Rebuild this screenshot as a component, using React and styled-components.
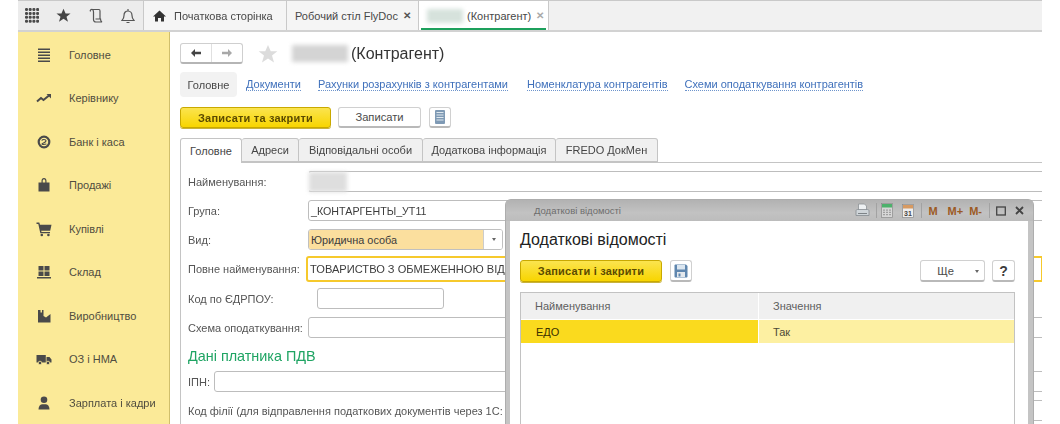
import React from "react";
import styled, { createGlobalStyle } from "styled-components";

const Global = createGlobalStyle`
  html, body { margin: 0; padding: 0; background: #fff; overflow: hidden; }
  body { font-family: "Liberation Sans", Arial, sans-serif; }
`;

const Shell = styled.div`
  position: relative;
  width: 1024px;
  height: 424px;
  margin-left: 18px;
  overflow: hidden;
  display: flex;
  flex-direction: column;
  filter: blur(0.4px);
  color: #4b4b4b;
`;

const TopBar = styled.header`
  flex: none;
  height: 32px;
  box-sizing: border-box;
  display: flex;
  background: #f1f1f1;
  border-top: 1px solid #c9c9c9;
  border-bottom: 2px solid #d2d2d2;
`;
const QuickIcons = styled.div`
  width: 125px;
  flex: none;
  display: flex;
  align-items: center;
  gap: 17px;
  padding-left: 7px;
  box-sizing: border-box;
  background: #ececec;
`;
const TabCell = styled.div`
  display: flex;
  align-items: center;
  flex: none;
  width: ${(p) => p.$w}px;
  box-sizing: border-box;
  padding-left: ${(p) => p.$pad}px;
  height: 100%;
  font-size: 11px;
  color: #484848;
  background: ${(p) => (p.$active ? "#fff" : "#f5f5f5")};
  border-left: 1px solid #c9c9c9;
  position: relative;
  ${(p) => p.$active && "border-right: 1px solid #c9c9c9;"}
  &::after {
    content: "";
    display: ${(p) => (p.$active ? "block" : "none")};
    position: absolute;
    left: 2px;
    right: 2px;
    bottom: 0;
    height: 2px;
    background: #1da05c;
  }
`;
const HomeGap = styled.span`width: 8px; flex: none;`;
const TabFill = styled.div`flex: 1;`;
const TabClose = styled.span`
  margin-left: 5px;
  font-size: 9.5px;
  font-weight: bold;
  color: ${(p) => (p.$dim ? "#aaa" : "#555")};
`;
const Blur = styled.span`
  display: inline-block;
  width: ${(p) => p.$w}px;
  height: ${(p) => p.$h}px;
  margin-left: ${(p) => p.$ml || 0}px;
  margin-right: ${(p) => p.$mr || 0}px;
  background: ${(p) => p.$c || "#d2d4d2"};
  filter: blur(2px);
  flex: none;
`;
const Body = styled.div`
  flex: 1;
  display: flex;
  min-height: 0;
`;
const Sidebar = styled.nav`
  width: 152px;
  flex: none;
  box-sizing: border-box;
  padding-top: 1px;
  background: #fbea98;
  border-right: 1px solid #d0bf6c;
`;
const SideItem = styled.div`
  height: 43.5px;
  display: flex;
  align-items: center;
  padding-left: 18px;
  gap: 17px;
  font-size: 11px;
  color: #504d40;
  white-space: nowrap;
`;
const Main = styled.main`
  flex: 1;
  min-width: 0;
  padding-left: 10px;
  display: flex;
  flex-direction: column;
`;
const TitleRow = styled.div`
  margin-top: 11px;
  height: 21px;
  display: flex;
  align-items: center;
`;
const NavButtons = styled.div`
  display: flex;
  width: 63px;
  height: 21px;
  box-sizing: border-box;
  border: 1px solid #cfcfcf;
  border-bottom: 2px solid #b5b5b5;
  border-radius: 3px;
  background: #fff;
  margin-right: 15px;
`;
const NavButton = styled.div`
  flex: 1;
  display: flex;
  align-items: center;
  justify-content: center;
  & + & { border-left: 1px solid #e0e0e0; }
`;
const Title = styled.h1`
  margin: 0;
  font-size: 16px;
  font-weight: normal;
  color: #333;
  display: flex;
  align-items: center;
`;
const Links = styled.div`
  margin-top: 8px;
  height: 25px;
  display: flex;
  align-items: center;
  font-size: 11px;
`;
const Chip = styled.div`
  width: 57px;
  height: 25px;
  margin-right: 9px;
  border-radius: 4px;
  background: #f2f2f2;
  display: flex;
  align-items: center;
  justify-content: center;
  color: #484848;
`;
const Link = styled.a`
  color: #3f70bb;
  border-bottom: 1px dotted #6d94cc;
  line-height: 12px;
  margin-right: ${(p) => p.$mr || 17}px;
  white-space: nowrap;
`;
const Toolbar = styled.div`
  margin-top: 10px;
  height: 21px;
  display: flex;
  gap: 7px;
`;
const YellowButton = styled.button`
  width: ${(p) => p.$w}px;
  height: ${(p) => p.$h || 21}px;
  box-sizing: border-box;
  padding: 0;
  border: 1px solid #c9a900;
  border-radius: 3px;
  background: linear-gradient(#fbe44f, #f8d500);
  color: #5b4a00;
  font: bold 11px "Liberation Sans", Arial, sans-serif;
  letter-spacing: 0.2px;
  box-shadow: 0 1px 0 #c8b23c;
`;
const PlainButton = styled.button`
  width: ${(p) => p.$w}px;
  height: ${(p) => p.$h || 21}px;
  margin-left: ${(p) => p.$ml || 0}px;
  box-sizing: border-box;
  padding: 0 ${(p) => p.$pr || 0}px 0 0;
  border: 1px solid #d0d0d0;
  border-bottom: 2px solid #b9b9b9;
  border-radius: 3px;
  background: #fff;
  color: #4a4a4a;
  font: 11.2px "Liberation Sans", Arial, sans-serif;
  display: flex;
  align-items: center;
  justify-content: center;
  position: relative;
  flex: none;
`;
const HelpButton = styled(PlainButton)`
  font-size: 14px;
  font-weight: bold;
  color: #3c3c3c;
`;
const Caret = styled.span`
  position: absolute;
  right: 5px;
  top: 9px;
  width: 0;
  height: 0;
  border: 2.5px solid transparent;
  border-top: 3px solid #666;
`;
const Tabs = styled.div`
  margin-top: 10px;
  height: 24px;
  display: flex;
  flex: none;
`;
const FormTab = styled.div`
  width: ${(p) => p.$w}px;
  box-sizing: border-box;
  height: ${(p) => (p.$active ? 25 : 24)}px;
  display: flex;
  align-items: center;
  justify-content: center;
  font-size: 11px;
  color: #454545;
  background: ${(p) => (p.$active ? "#fff" : "#f0f0f0")};
  border: 1px solid #c4c4c4;
  border-left-width: ${(p) => (p.$active ? 1 : 0)}px;
  border-bottom-width: ${(p) => (p.$active ? 0 : 1)}px;
  border-radius: 3px 3px 0 0;
  position: relative;
`;
const Panel = styled.section`
  flex: 1;
  border-left: 1px solid #c4c4c4;
  border-top: 1px solid #c4c4c4;
  padding: 8px 0 0 7px;
  margin-right: -1px;
`;
const Row = styled.div`
  display: flex;
  align-items: center;
  height: ${(p) => p.$h || 21}px;
  margin-top: ${(p) => p.$mt || 0}px;
`;
const Label = styled.label`
  width: ${(p) => p.$w}px;
  flex: none;
  font-size: 11px;
  color: #555;
  white-space: nowrap;
`;
const Field = styled.div`
  height: 100%;
  box-sizing: border-box;
  border: 1px solid #bdbdbd;
  border-radius: 3px 0 0 3px;
  background: #fff;
  font-size: 10.7px;
  color: #3c3c3c;
  padding-left: 2px;
  display: flex;
  align-items: center;
  overflow: hidden;
  white-space: nowrap;
  ${(p) => (p.$w ? `width: ${p.$w}px; flex: none; border-radius: 3px;` : "flex: 1;")}
  ${(p) => p.$focus && "border: 2px solid #f6c92c; padding-left: 2px; font-size: 11.1px;"}
`;
const BlurField = styled(Field)`
  border-left-color: transparent;
  padding-left: 0;
  overflow: visible;
`;
const PeachField = styled.div`
  width: 195px;
  height: 100%;
  flex: none;
  box-sizing: border-box;
  border: 1px solid #c0c0c0;
  border-radius: 3px;
  display: flex;
  overflow: hidden;
  font-size: 10.9px;
  color: #3c3c3c;
`;
const PeachValue = styled.div`
  flex: 1;
  background: #fbdf9e;
  padding-left: 2px;
  display: flex;
  align-items: center;
`;
const Drop = styled.div`
  width: 18px;
  position: relative;
  background: #fff;
  border-left: 1px solid #ccc;
`;
const DropCaret = styled(Caret)`
  right: 6px;
  top: 8px;
`;
const SectionTitle = styled.h2`
  margin: 8px 0 5px;
  height: 20px;
  line-height: 20px;
  font-size: 14.4px;
  font-weight: normal;
  color: #1fa463;
`;

const Modal = styled.div`
  position: absolute;
  left: 487px;
  top: 199px;
  width: 529px;
  height: 240px;
  box-sizing: border-box;
  display: flex;
  flex-direction: column;
  background: #c4c4c4;
  border-radius: 6px 6px 0 0;
  border: 1px solid #adadad;
  border-bottom: 0;
`;
const ModalHeader = styled.div`
  height: 21px;
  flex: none;
  display: flex;
  align-items: center;
  padding-left: 28px;
  font-size: 9.5px;
  color: #6c6c6c;
  background: linear-gradient(#b2b2b2, #c2c2c2 60%, #bcbcbc);
  border-radius: 5px 5px 0 0;
`;
const ModalTools = styled.div`
  margin-left: auto;
  display: flex;
  align-items: center;
  height: 100%;
  color: #9b5a24;
  font-size: 11px;
  font-weight: bold;
  padding-right: 9px;
`;
const ToolSep = styled.span`
  width: 1px;
  height: 15px;
  background: #a2a2a2;
  margin: 0 ${(p) => p.$r || 5}px 0 ${(p) => p.$l || 5}px;
`;
const ToolGap = styled.span`width: 9px; flex: none;`;
const Mem = styled.span`
  margin-right: ${(p) => p.$mr}px;
`;
const ModalBody = styled.div`
  flex: 1;
  margin: 0 5px 0 4px;
  background: #fff;
  padding: 0 13px 0 10px;
  display: flex;
  flex-direction: column;
`;
const ModalTitle = styled.h3`
  margin: 9px 0 0;
  height: 20px;
  line-height: 20px;
  font-size: 16px;
  font-weight: normal;
  color: #222;
`;
const ModalBar = styled.div`
  margin-top: 10px;
  height: 22px;
  flex: none;
  display: flex;
  gap: 8px;
`;
const Spacer = styled.div`flex: 1;`;
const Table = styled.div`
  margin-top: 10px;
  flex: 1;
  border: 1px solid #c2c2c2;
  border-bottom: 0;
  font-size: 11px;
`;
const TableRow = styled.div`
  display: grid;
  grid-template-columns: 237px 1fr;
  gap: 1px;
`;
const HeadCell = styled.div`
  height: 26px;
  box-sizing: border-box;
  padding-left: 14px;
  display: flex;
  align-items: center;
  background: #f0f0f0;
  color: #5e5e5e;
`;
const Cell = styled.div`
  height: 23px;
  margin-top: 1px;
  box-sizing: border-box;
  padding-left: ${(p) => p.$pad}px;
  display: flex;
  align-items: center;
  background: ${(p) => (p.$current ? "#fada1e" : "#fdf0a2")};
  color: ${(p) => (p.$current ? "#3a3000" : "#4c4a38")};
`;

const Ic = ({ w = 16, h = 16, vb, children, fill = "#4a4a4a" }) => (
  <svg width={w} height={h} viewBox={vb || `0 0 ${w} ${h}`} fill={fill} style={{ flex: "none", display: "block" }}>
    {children}
  </svg>
);

const GridIcon = () => (
  <Ic w={14} h={15}>
    {[0, 1, 2, 3].map((r) =>
      [0, 1, 2, 3].map((c) => <rect key={`${r}${c}`} x={c * 3.7} y={r * 3.9} width="3" height="3" rx="1.2" />)
    )}
  </Ic>
);
const StarPath = "M8 0.8l2.2 5h5.3l-4.300 3.400 1.600 5.500L8 11.500l-4.800 3.200 1.600-5.500L0.500 5.800h5.300z";
const StarIcon = ({ fill = "#444", size = 15 }) => (
  <Ic w={size} h={size} vb="0 0 16 16" fill={fill}><path d={StarPath} /></Ic>
);
const ScrollIcon = () => (
  <svg width="16" height="16" viewBox="0 0 16 16" fill="none" stroke="#555" strokeWidth="1.200" style={{ flex: "none" }}>
    <path d="M2.500 3.500c-1-1.500 1-2.500 2-2H11c.8 0 1 .6 1 1.500v8" />
    <path d="M4.500 1.500c1 .7 1 1.500 1 2.500v7.500c0 1.500 1 2.500 2.500 2.500h6c-1-.5-1.500-1.500-1.500-3H7.500" />
  </svg>
);
const BellIcon = () => (
  <svg width="14" height="16" viewBox="0 0 14 16" fill="none" stroke="#555" strokeWidth="1.200" style={{ flex: "none" }}>
    <path d="M1 12.500h12c-1.500-1.500-2-2.500-2-5 0-2.500-1.500-4.500-4-4.500s-4 2-4 4.500c0 2.500-.5 3.500-2 5zM5.500 14.500h3M7 1v2" />
  </svg>
);
const HomeIcon = () => (
  <Ic w={13} h={12} vb="0 0 13 12" fill="#333"><path d="M6.500 0.500L13 6.500h-2v5H8V8H5v3.500H2v-5H0z" /></Ic>
);
const Arrow = ({ dir, color }) => (
  <svg width="12" height="10" viewBox="0 0 12 10" fill={color} style={dir === "r" ? { transform: "scaleX(-1)" } : undefined}>
    <path d="M5 1L1 5l4 4V6.200h6V3.800H5z" />
  </svg>
);

const sideIcons = {
  menu: (
    <Ic><path d="M2 1.500h12v1.400H2zM2 4.500h12v1.400H2zM2 7.500h12v1.400H2zM2 10.500h12v1.400H2zM2 13.500h12v1.400H2z" /></Ic>
  ),
  chart: (
    <svg width="16" height="16" viewBox="0 0 16 16" fill="none" stroke="#4a4a4a" strokeWidth="2" style={{ flex: "none" }}>
      <path d="M1 11.500l4-3.500 2.500 2L13 5.500" />
      <path d="M10.500 4H15v4.500z" fill="#4a4a4a" stroke="none" />
    </svg>
  ),
  bank: (
    <svg width="16" height="16" viewBox="0 0 16 16" fill="none" stroke="#4a4a4a" style={{ flex: "none" }}>
      <circle cx="8" cy="8" r="5.300" strokeWidth="2.200" />
      <path d="M5.800 6.600c.6-1.500 4-1.500 4.200.2.200 1.600-4 2.400-4 3.200.6.500 3 .4 4.400 0" strokeWidth="1.200" />
    </svg>
  ),
  bag: (
    <Ic><path d="M2.500 5.500h11v9h-11z" /><path d="M5.500 6V4c0-1.800 1-3 2.500-3s2.500 1.200 2.500 3v2H9.300V4c0-1-.5-1.800-1.300-1.800S6.700 3 6.700 4v2z" /></Ic>
  ),
  cart: (
    <Ic>
      <path d="M0.500 1.500h2.800l.7 2.300H15.500l-1.300 6H5.200l.3 1.200h8.500v1.300H4.300L2.300 2.900H.5z" />
      <circle cx="5.800" cy="14" r="1.300" /><circle cx="12.400" cy="14" r="1.300" />
    </Ic>
  ),
  stock: (
    <Ic><path d="M2.500 2h5v4.500h-5zM8.500 2h5v4.500h-5zM2.500 7.500h5V12h-5zM8.500 7.500h5V12h-5zM1 13h14v1.500H1z" /></Ic>
  ),
  factory: (
    <Ic><path d="M2 14.500V2h2.500v2.500H6V2h1.500v6L10 9.500 14.500 6v8.500z" /></Ic>
  ),
  truck: (
    <Ic>
      <path d="M0.500 4h9.300v7.500H0.500zM10.500 6h3l2 2.500v3h-5z" />
      <circle cx="4" cy="12" r="1.800" stroke="#fbea98" strokeWidth=".8" /><circle cx="12" cy="12" r="1.800" stroke="#fbea98" strokeWidth=".8" />
    </Ic>
  ),
  person: (
    <Ic><circle cx="8" cy="4.800" r="3.300" /><path d="M2.500 14.500c0-3 1.500-5 3.500-5.200h4c2 .2 3.500 2.200 3.500 5.200z" /></Ic>
  ),
};

const ListIcon = () => (
  <svg width="10" height="14" viewBox="0 0 10 14">
    <rect x="0" y="0" width="10" height="14" rx="1" fill="#7f9ab5" />
    <path d="M1.500 2.500h7M1.500 5h7M1.500 7.500h7M1.500 10h7" stroke="#dfe8ef" strokeWidth="1" />
  </svg>
);
const SaveIcon = () => (
  <svg width="14" height="14" viewBox="0 0 14 14">
    <path d="M0.500 1.500C.5 1 1 .5 1.500.5H12l1.500 1.500v10.500c0 .5-.5 1-1 1h-11c-.5 0-1-.5-1-1z" fill="#5f86ae" />
    <rect x="3" y="1" width="8" height="4.500" fill="#dbe6f0" />
    <rect x="3" y="8" width="8" height="5" fill="#e4e8ec" />
    <rect x="4.500" y="9.500" width="2" height="3" fill="#5f86ae" />
  </svg>
);
const PrintIcon = () => (
  <svg width="15" height="15" viewBox="0 0 15 15">
    <path d="M3.500 1h6l2 2v5h-8z" fill="#eef1f3" stroke="#8d9296" strokeWidth=".8" />
    <path d="M1 8c0-1 .6-1.500 1.500-1.500h10c.9 0 1.500.5 1.500 1.500v4.500H1z" fill="#cfd5d9" stroke="#858b90" strokeWidth=".8" />
    <path d="M3 10.500h9" stroke="#7d8387" strokeWidth="1" />
  </svg>
);
const CalcIcon = () => (
  <svg width="12" height="15" viewBox="0 0 12 15">
    <rect x=".5" y=".5" width="11" height="14" fill="#d7d7d7" stroke="#8b8b8b" strokeWidth=".7" />
    <rect x="1" y="1" width="10" height="3.500" fill="#4cb16b" />
    <path d="M3 6.500v6M6 6.500v6M9 6.500v6" stroke="#7b7b7b" strokeWidth="1.200" strokeDasharray="1.300 .9" />
  </svg>
);
const CalendarIcon = () => (
  <svg width="12" height="15" viewBox="0 0 12 15">
    <rect x=".5" y="1.500" width="11" height="13" fill="#eee" stroke="#8b8b8b" strokeWidth=".7" />
    <rect x="1" y="2" width="10" height="3.500" fill="#d79a62" />
    <text x="6" y="12.500" fontSize="7" fontFamily="Liberation Sans" textAnchor="middle" fill="#444">31</text>
  </svg>
);
const MaxIcon = () => (
  <svg width="10" height="10" viewBox="0 0 10 10" fill="none" stroke="#444" strokeWidth="1.300">
    <rect x=".7" y="1" width="8.600" height="8" />
  </svg>
);
const CloseIcon = () => (
  <svg width="9" height="9" viewBox="0 0 9 9" fill="none" stroke="#444" strokeWidth="1.800">
    <path d="M1 1l7 7M8 1L1 8" />
  </svg>
);

const menu = [
  ["menu", "Головне"],
  ["chart", "Керівнику"],
  ["bank", "Банк і каса"],
  ["bag", "Продажі"],
  ["cart", "Купівлі"],
  ["stock", "Склад"],
  ["factory", "Виробництво"],
  ["truck", "ОЗ і НМА"],
  ["person", "Зарплата і кадри"],
];

export default function App() {
  return (
    <Shell>
      <Global />
      <TopBar>
        <QuickIcons>
          <GridIcon />
          <StarIcon />
          <ScrollIcon />
          <BellIcon />
        </QuickIcons>
        <TabCell $w={143} $pad={9}>
          <HomeIcon />
          <HomeGap />
          Початкова сторінка
        </TabCell>
        <TabCell $w={132} $pad={8}>
          Робочий стіл FlyDoc<TabClose>✕</TabClose>
        </TabCell>
        <TabCell $w={131} $pad={8} $active>
          <Blur $w={36} $h={14} $mr={4} $c="#d6e2dc" />
          (Контрагент)<TabClose $dim>✕</TabClose>
        </TabCell>
        <TabFill />
      </TopBar>
      <Body>
        <Sidebar>
          {menu.map(([k, t]) => (
            <SideItem key={k}>
              {sideIcons[k]}
              {t}
            </SideItem>
          ))}
        </Sidebar>
        <Main>
          <TitleRow>
            <NavButtons>
              <NavButton><Arrow dir="l" color="#444" /></NavButton>
              <NavButton><Arrow dir="r" color="#a8a8a8" /></NavButton>
            </NavButtons>
            <StarIcon fill="#dcdcdc" size={20} />
            <Title>
              <Blur $w={56} $h={17} $mr={3} $ml={14} $c="#d4d4d4" />
              (Контрагент)
            </Title>
          </TitleRow>
          <Links>
            <Chip>Головне</Chip>
            <Link>Документи</Link>
            <Link $mr={19}>Рахунки розрахунків з контрагентами</Link>
            <Link>Номенклатура контрагентів</Link>
            <Link>Схеми оподаткування контрагентів</Link>
          </Links>
          <Toolbar>
            <YellowButton $w={151}>Записати та закрити</YellowButton>
            <PlainButton $w={83}>Записати</PlainButton>
            <PlainButton $w={22} $ml={1}><ListIcon /></PlainButton>
          </Toolbar>
          <Tabs>
            <FormTab $w={62} $active>Головне</FormTab>
            <FormTab $w={57}>Адреси</FormTab>
            <FormTab $w={124}>Відповідальні особи</FormTab>
            <FormTab $w={133}>Додаткова інформація</FormTab>
            <FormTab $w={102}>FREDO ДокМен</FormTab>
          </Tabs>
          <Panel>
            <Row>
              <Label $w={120}>Найменування:</Label>
              <BlurField><Blur $w={38} $h={20} $c="#dedede" /></BlurField>
            </Row>
            <Row $mt={8}>
              <Label $w={120}>Група:</Label>
              <Field>_КОНТАРГЕНТЫ_УТ11</Field>
            </Row>
            <Row $mt={8}>
              <Label $w={120}>Вид:</Label>
              <PeachField>
                <PeachValue>Юридична особа</PeachValue>
                <Drop><DropCaret /></Drop>
              </PeachField>
            </Row>
            <Row $mt={6} $h={26}>
              <Label $w={118}>Повне найменування:</Label>
              <Field $focus>ТОВАРИСТВО З ОБМЕЖЕННОЮ ВІД</Field>
            </Row>
            <Row $mt={6}>
              <Label $w={129}>Код по ЄДРПОУ:</Label>
              <Field $w={127} />
            </Row>
            <Row $mt={8}>
              <Label $w={120}>Схема оподаткування:</Label>
              <Field />
            </Row>
            <SectionTitle>Дані платника ПДВ</SectionTitle>
            <Row>
              <Label $w={26}>ІПН:</Label>
              <Field />
            </Row>
            <Row $mt={8}>
              <Label $w={320}>Код філії (для відправлення податкових документів через 1С:</Label>
              <Field />
            </Row>
          </Panel>
        </Main>
      </Body>
      <Modal>
        <ModalHeader>
          Додаткові відомості
          <ModalTools>
            <PrintIcon />
            <ToolSep $l={6} $r={4} />
            <CalcIcon />
            <ToolGap />
            <CalendarIcon />
            <ToolSep $l={7} $r={6} />
            <Mem $mr={10}>M</Mem>
            <Mem $mr={6}>M+</Mem>
            <Mem $mr={0}>M-</Mem>
            <ToolSep $l={7} $r={6} />
            <MaxIcon />
            <ToolGap />
            <CloseIcon />
          </ModalTools>
        </ModalHeader>
        <ModalBody>
          <ModalTitle>Додаткові відомості</ModalTitle>
          <ModalBar>
            <YellowButton $w={142} $h={22}>Записати і закрити</YellowButton>
            <PlainButton $w={22} $h={22}><SaveIcon /></PlainButton>
            <Spacer />
            <PlainButton $w={65} $h={22} $pr={14}>Ще<Caret /></PlainButton>
            <HelpButton $w={23} $h={22} $ml={-1}>?</HelpButton>
          </ModalBar>
          <Table>
            <TableRow>
              <HeadCell>Найменування</HeadCell>
              <HeadCell>Значення</HeadCell>
            </TableRow>
            <TableRow>
              <Cell $current $pad={15}>ЕДО</Cell>
              <Cell $pad={14}>Так</Cell>
            </TableRow>
          </Table>
        </ModalBody>
      </Modal>
    </Shell>
  );
}
